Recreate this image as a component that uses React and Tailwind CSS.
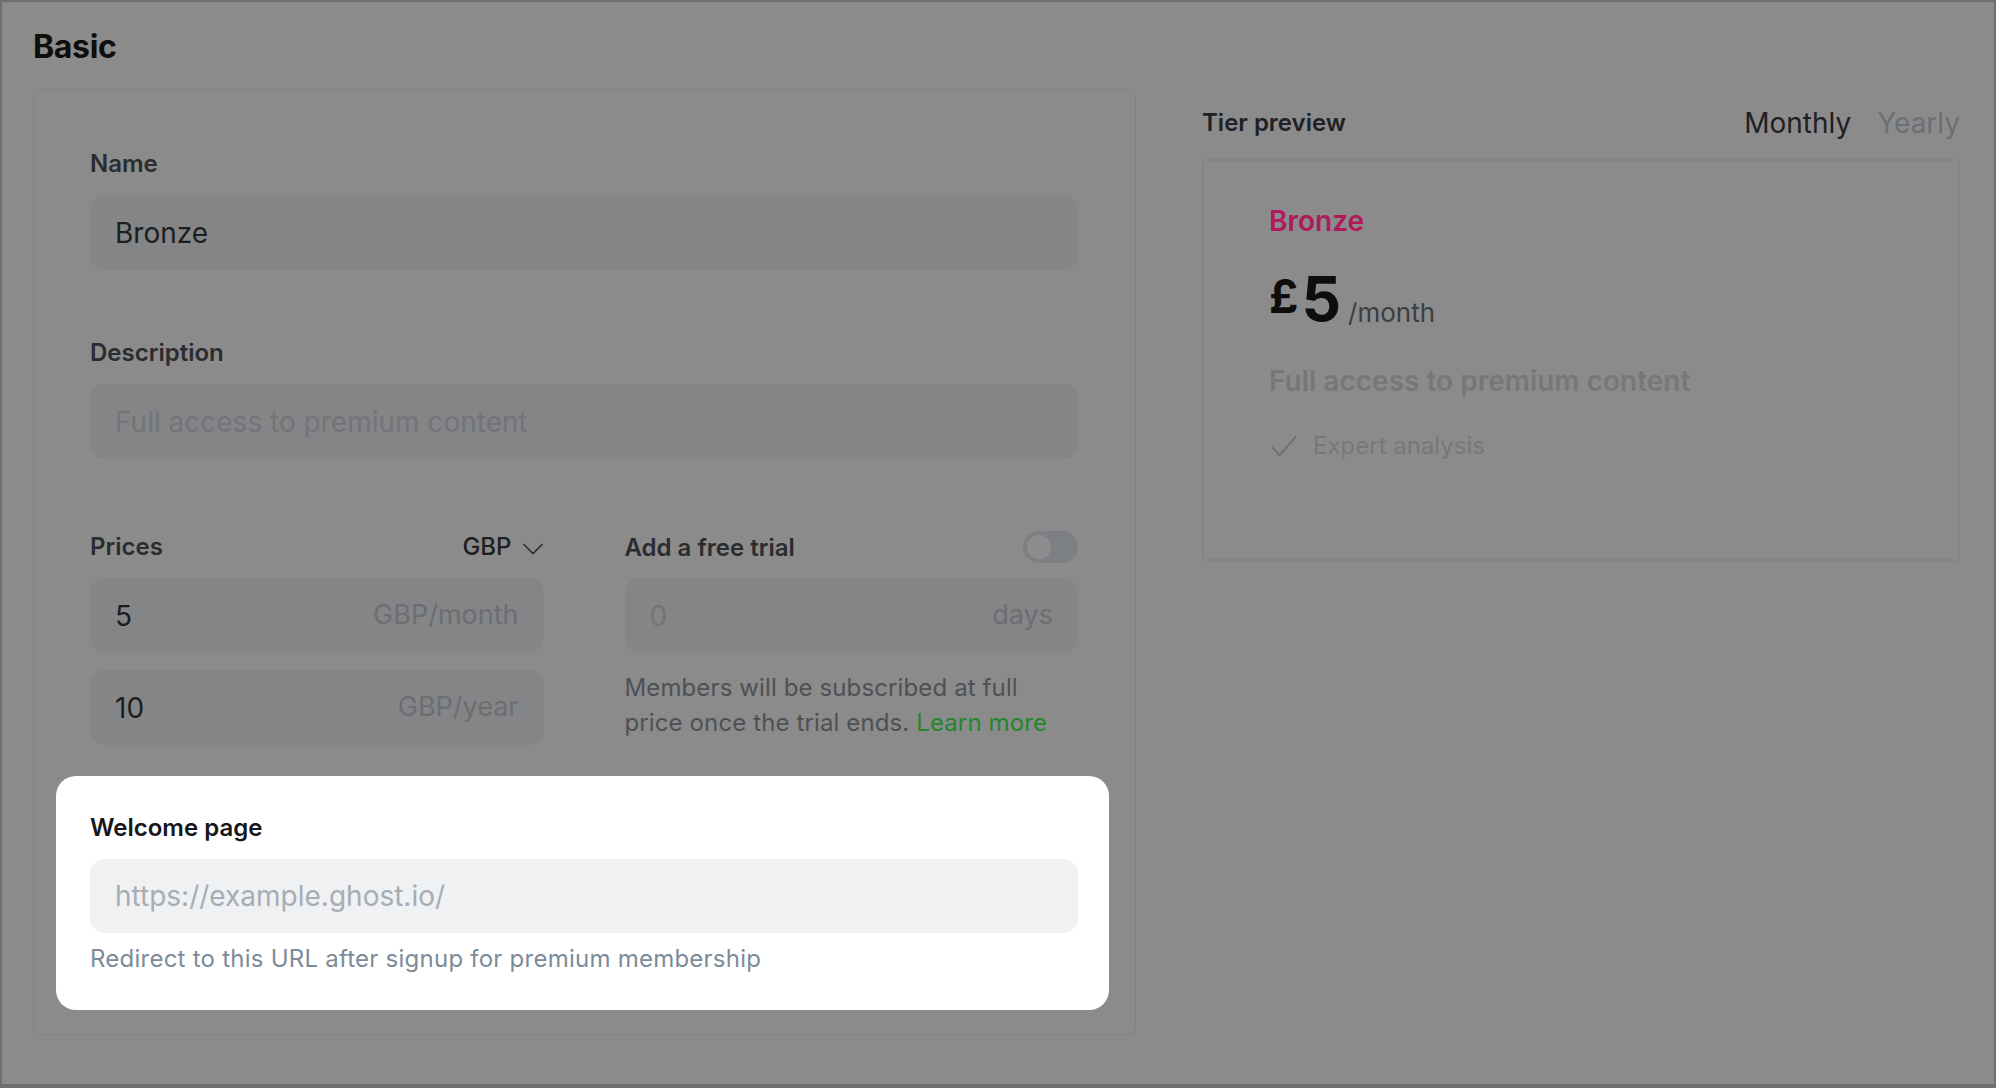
import React from 'react'

const Label = ({ children, className = '' }) => (
  <div className={`text-[24px] leading-[28px] font-semibold text-[#2a2c2f] ${className}`}>{children}</div>
)

const Field = ({ value, placeholder, suffix, className = '' }) => (
  <div className={`h-[75px] rounded-[15px] bg-[#848587] px-[25px] flex items-center justify-between text-[28px] ${className}`}>
    {value ? (
      <span className="text-[#1c1d1f]">{value}</span>
    ) : (
      <span className="text-[#727477]">{placeholder}</span>
    )}
    {suffix && <span className="text-[#6c6e72] text-[27px]">{suffix}</span>}
  </div>
)

const Toggle = () => (
  <div className="w-[55px] h-[32px] rounded-full bg-[#7c8085] flex items-center pl-[4px]">
    <div className="w-[24px] h-[24px] rounded-full bg-[#8d8d8d]" />
  </div>
)

const App = () => {
  return (
    <div className="w-[1996px] h-[1088px] bg-[#8b8b8b] border-2 border-b-4 border-[#6f6f6f] font-['Inter',sans-serif] overflow-hidden">
      <div className="pl-[31px] pt-[25px]">
        <h1 className="text-[32px] leading-[40px] font-bold tracking-[-0.01em] text-[#0e0e0e]">Basic</h1>
      </div>

      <div className="flex gap-[66px] pl-[31px] mt-[22px]">
        {/* left form panel */}
        <div className="w-[1103px] border border-[#838383] rounded-[4px] pt-[60px] pb-[24px] pl-[56px] pr-[57px]">
          <Label>Name</Label>
          <Field value="Bronze" className="mt-[17px]" />

          <Label className="mt-[69px]">Description</Label>
          <Field placeholder="Full access to premium content" className="mt-[17px]" />

          <div className="grid grid-cols-2 gap-x-[81px] mt-[72px]">
            <div>
              <div className="flex items-center justify-between h-[32px]">
                <Label>Prices</Label>
                <div className="flex items-center gap-[10px] text-[24px] font-medium text-[#1d1f21]">
                  <span>GBP</span>
                  <svg width="22" height="14" viewBox="0 0 22 14" fill="none" className="mt-[4px]">
                    <path d="M1.5 2 L11 11.5 L20.5 2" stroke="#2a2c2f" strokeWidth="1.6" />
                  </svg>
                </div>
              </div>
              <div className="flex flex-col gap-[17px] mt-[15px]">
                <Field value="5" suffix="GBP/month" />
                <Field value="10" suffix="GBP/year" />
              </div>
            </div>
            <div>
              <div className="flex items-center justify-between h-[32px]">
                <Label className="mt-[2px]">Add a free trial</Label>
                <Toggle />
              </div>
              <Field placeholder="0" suffix="days" className="mt-[15px] bg-[#87888a]" />
              <p className="mt-[17px] text-[24px] leading-[35px] tracking-[0.005em] text-[#4d5155]">
                Members will be subscribed at full
                <br />
                price once the trial ends. <span className="text-[#24872a]">Learn more</span>
              </p>
            </div>
          </div>

          <div className="-ml-[34px] -mr-[31px] mt-[31px] bg-white rounded-[20px] pt-[38px] pb-[37px] pl-[34px] pr-[31px]">
            <div className="text-[24px] leading-[28px] font-semibold text-[#15171a]">Welcome page</div>
            <div className="mt-[17px] h-[74px] rounded-[15px] bg-[#f0f1f3] px-[25px] flex items-center text-[28px] text-[#a6adb5]">
              https://example.ghost.io/
            </div>
            <div className="mt-[12px] text-[24px] leading-[28px] tracking-[0.01em] text-[#7c8b9a]">
              Redirect to this URL after signup for premium membership
            </div>
          </div>
        </div>

        {/* right preview column */}
        <div className="w-[758px] pt-[17px]">
          <div className="flex items-center justify-between h-[34px]">
            <div className="text-[24px] font-semibold text-[#1f2124]">Tier preview</div>
            <div className="flex items-center gap-[26px] text-[28px]">
              <span className="text-[#1e2023]">Monthly</span>
              <span className="text-[#6b6f75]">Yearly</span>
            </div>
          </div>
          <div className="mt-[19px] h-[402px] border-2 border-[#848484] rounded-[4px] pl-[65px] pt-[43px]">
            <div className="text-[28px] leading-[34px] font-semibold text-[#ae1a5b]">Bronze</div>
            <div className="flex items-start mt-[26px]">
              <span className="mt-[4px] mr-[3px] text-[46px] leading-[56px] font-bold text-[#0d0d0d]">£</span>
              <span className="text-[62px] leading-[70px] font-bold text-[#0d0d0d]">5</span>
              <span className="mt-[33px] ml-[7px] text-[26px] leading-[32px] text-[#3c3e41]">/month</span>
            </div>
            <div className="mt-[30px] text-[28px] leading-[34px] font-semibold text-[#777777]">
              Full access to premium content
            </div>
            <div className="mt-[33px] flex items-center gap-[14px]">
              <svg width="30" height="30" viewBox="0 0 24 24" fill="none">
                <path d="M2.5 13 L8.5 19.5 L21.5 4.5" stroke="#707070" strokeWidth="1.6" />
              </svg>
              <span className="text-[24px] leading-[30px] text-[#787878]">Expert analysis</span>
            </div>
          </div>
        </div>
      </div>
    </div>
  )
}

export default App
